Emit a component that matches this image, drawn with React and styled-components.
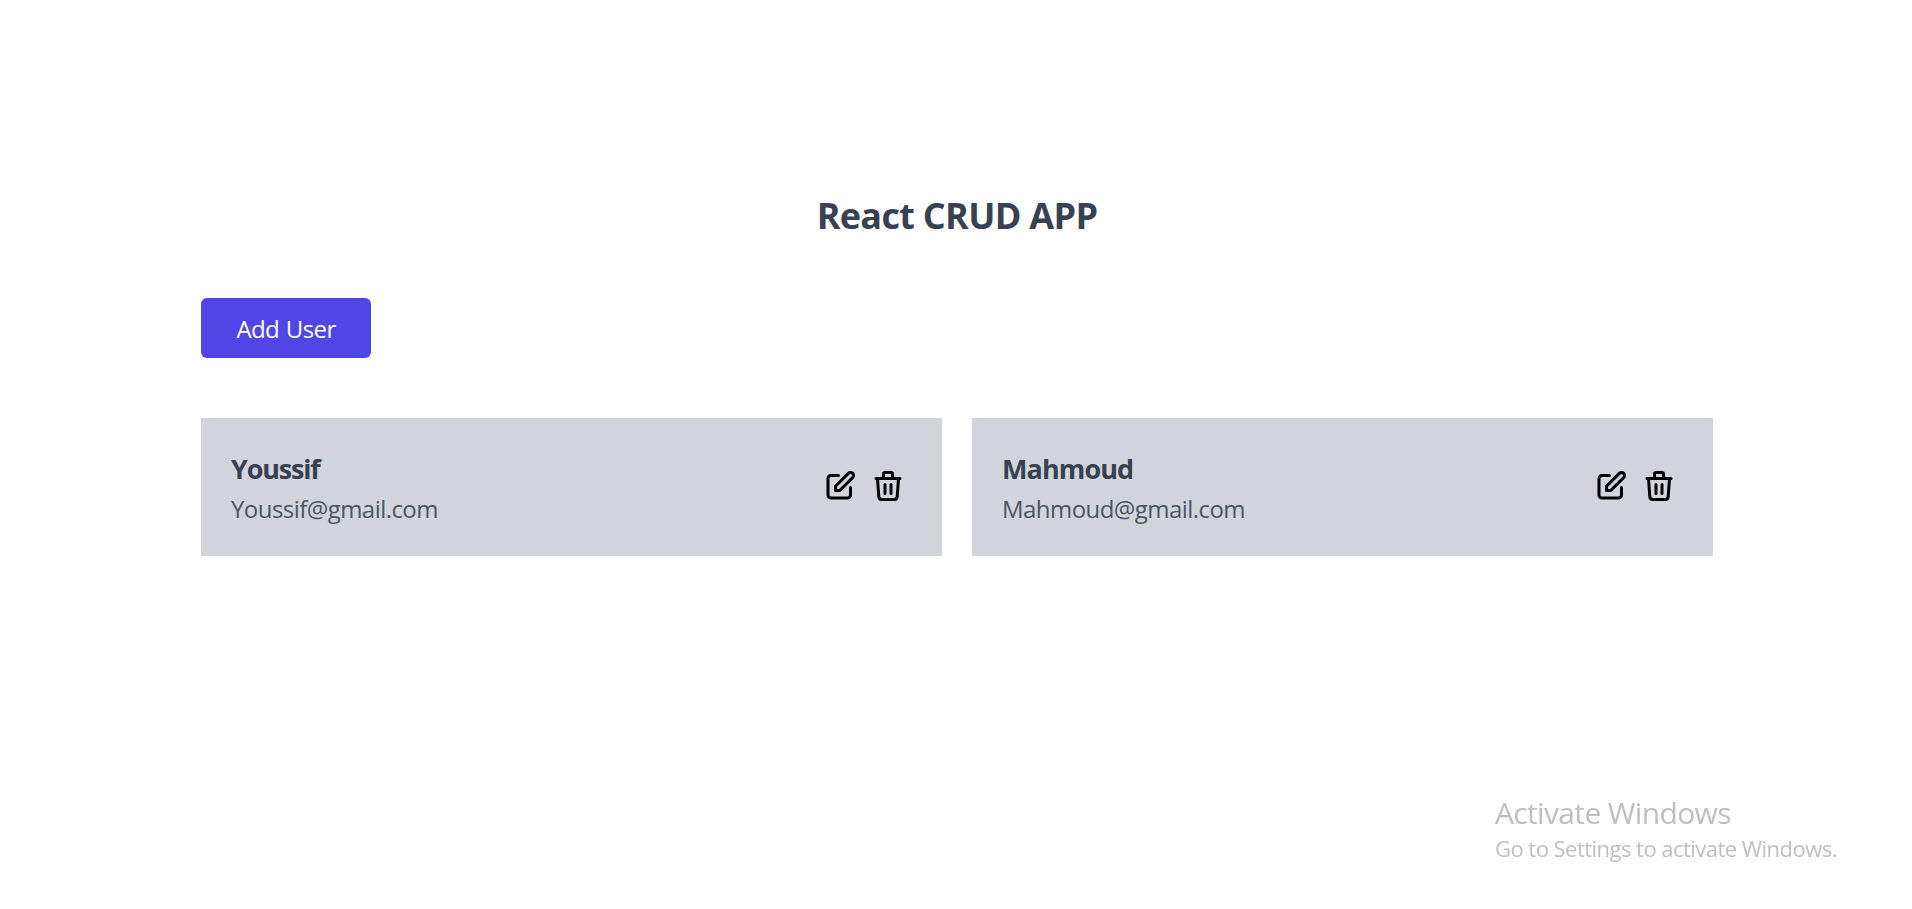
import React from "react";
import styled, { createGlobalStyle } from "styled-components";

const GlobalStyle = createGlobalStyle`
  *, *::before, *::after { box-sizing: border-box; }
  body {
    margin: 0;
    background: #fff;
    font-family: "Open Sans", "Noto Sans", sans-serif;
    overflow: hidden;
  }
`;

const Page = styled.main`
  display: flex;
  flex-direction: column;
  align-items: flex-start;
  width: 1512px;
  margin: 0 199px 0 201px;
  padding-top: 192px;
`;

const Title = styled.h1`
  align-self: center;
  margin: 0 0 58px;
  font-size: 36px;
  line-height: 48px;
  font-weight: 700;
  letter-spacing: -0.68px;
  color: #374151;
`;

const AddButton = styled.button`
  width: 170px;
  height: 60px;
  padding: 2px 0 0;
  border: 0;
  border-radius: 6px;
  background: #4f46e5;
  color: #fff;
  font: 400 24px/36px "Open Sans", "Noto Sans", sans-serif;
  letter-spacing: -0.6px;
  word-spacing: 1px;
`;

const UserGrid = styled.section`
  display: grid;
  grid-template-columns: 1fr 1fr;
  gap: 30px;
  width: 100%;
  margin-top: 60px;
`;

const UserCard = styled.article`
  display: flex;
  align-items: center;
  justify-content: space-between;
  height: 138px;
  padding: 30px 36px 30px 30px;
  background: #d1d5db;
`;

const UserName = styled.h2`
  margin: 0;
  font-size: 27px;
  line-height: 42px;
  font-weight: 700;
  letter-spacing: ${(p) => p.$tracking}px;
  color: #374151;
`;

const UserEmail = styled.p`
  margin: 0;
  padding-top: 1px;
  font-size: 24px;
  line-height: 35px;
  font-weight: 400;
  letter-spacing: -0.55px;
  color: #4b5563;
`;

const Actions = styled.div`
  display: flex;
  gap: 12px;
  padding-bottom: 2px;
`;

const Icon = styled.svg`
  width: 36px;
  height: 36px;
  fill: none;
  stroke: #000;
  stroke-width: 2;
  stroke-linecap: round;
  stroke-linejoin: round;
`;

const Watermark = styled.aside`
  position: fixed;
  left: 1495px;
  top: 791px;
  color: #bfbfbf;
  white-space: nowrap;
`;

const WatermarkTitle = styled.div`
  font-size: 30px;
  line-height: 44px;
  letter-spacing: -0.65px;
`;

const WatermarkText = styled.div`
  font-size: 22px;
  line-height: 26px;
  letter-spacing: -0.53px;
`;

const users = [
  { name: "Youssif", email: "Youssif@gmail.com", tracking: -1.2 },
  { name: "Mahmoud", email: "Mahmoud@gmail.com", tracking: -0.9 },
];

const EditIcon = () => (
  <Icon viewBox="0 0 24 24">
    <path d="M11 5H6a2 2 0 00-2 2v11a2 2 0 002 2h11a2 2 0 002-2v-5m-1.414-9.414a2 2 0 112.828 2.828L11.828 15H9v-2.828l8.586-8.586z" />
  </Icon>
);

const TrashIcon = () => (
  <Icon viewBox="0 0 24 24">
    <path d="M19 7l-.867 12.142A2 2 0 0116.138 21H7.862a2 2 0 01-1.995-1.858L5 7m5 4v6m4-6v6m1-10V4a1 1 0 00-1-1h-4a1 1 0 00-1 1v3M4 7h16" />
  </Icon>
);

export default function App() {
  return (
    <>
      <GlobalStyle />
      <Page>
        <Title>React CRUD APP</Title>
        <AddButton>Add User</AddButton>
        <UserGrid>
          {users.map((user) => (
            <UserCard key={user.name}>
              <div>
                <UserName $tracking={user.tracking}>{user.name}</UserName>
                <UserEmail>{user.email}</UserEmail>
              </div>
              <Actions>
                <EditIcon />
                <TrashIcon />
              </Actions>
            </UserCard>
          ))}
        </UserGrid>
      </Page>
      <Watermark>
        <WatermarkTitle>Activate Windows</WatermarkTitle>
        <WatermarkText>Go to Settings to activate Windows.</WatermarkText>
      </Watermark>
    </>
  );
}
